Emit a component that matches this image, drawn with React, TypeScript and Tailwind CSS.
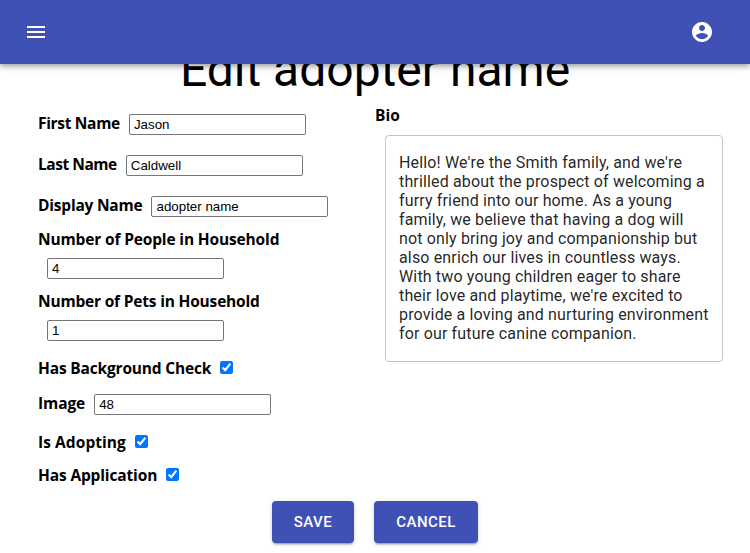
import type { ReactNode } from "react";

const label = "whitespace-nowrap font-['Open_Sans','Noto_Sans',sans-serif] text-[15.5px] font-bold leading-[22px]";
const button =
  "h-[42px] rounded bg-[#3f51b5] text-[15px] font-medium uppercase leading-[26px] tracking-[0.46px] text-white shadow-[0px_3px_1px_-2px_rgba(0,0,0,0.2),0px_2px_2px_0px_rgba(0,0,0,0.14),0px_1px_5px_0px_rgba(0,0,0,0.12)]";

function Input({ value }: { value: string }) {
  return (
    <input
      defaultValue={value}
      className="ml-[9px] h-[21px] w-[177px] rounded-[2px] border border-[#767676] bg-white px-1 font-['Liberation_Sans',sans-serif] text-[13.333px] leading-[15px] text-black"
    />
  );
}

function Check() {
  return <input type="checkbox" defaultChecked className="relative -top-px ml-[9px] h-[13px] w-[13px]" />;
}

function Row({ text, className, tracking, children }: { text: string; className: string; tracking: string; children?: ReactNode }) {
  return (
    <div className={`flex items-center ${className}`}>
      <label className={`${label} ${tracking}`}>{text}</label>
      {children}
    </div>
  );
}

export default function App() {
  return (
    <div className="h-[553px] w-[750px] overflow-hidden bg-white font-[Roboto,sans-serif] text-black">
      <header className="relative z-10 flex h-16 items-center justify-between bg-[#3f51b5] px-6 text-white shadow-[0px_2px_4px_-1px_rgba(0,0,0,0.2),0px_4px_5px_0px_rgba(0,0,0,0.14),0px_1px_10px_0px_rgba(0,0,0,0.12)]">
        <svg className="h-6 w-6" viewBox="0 0 24 24" fill="currentColor">
          <path d="M3 18h18v-2H3v2zm0-5h18v-2H3v2zm0-7v2h18V6H3z" />
        </svg>
        <svg className="mr-3 h-6 w-6" viewBox="0 0 24 24" fill="currentColor">
          <path d="M12 2C6.48 2 2 6.48 2 12s4.48 10 10 10 10-4.48 10-10S17.52 2 12 2zm0 3c1.66 0 3 1.34 3 3s-1.34 3-3 3-3-1.34-3-3 1.34-3 3-3zm0 14.2c-2.5 0-4.71-1.28-6-3.22.03-1.99 4-3.08 6-3.08 1.99 0 5.97 1.09 6 3.08-1.29 1.94-3.5 3.22-6 3.22z" />
        </svg>
      </header>
      <h1 className="-mt-[22px] h-[62px] text-center text-[48px] font-normal leading-[56px]">Edit adopter name</h1>
      <main className="flex h-[397px]">
        <div className="flex w-[375px] flex-col pl-[38px]">
          <Row text="First Name" className="h-[41px]" tracking="-mt-[3px] tracking-[-0.32px]"><Input value="Jason" /></Row>
          <Row text="Last Name" className="h-[41px]" tracking="-mt-[3px] tracking-[-0.46px]"><Input value="Caldwell" /></Row>
          <Row text="Display Name" className="h-[41px]" tracking="-mt-[3px] tracking-[-0.21px]"><Input value="adopter name" /></Row>
          <Row text="Number of People in Household" className="mt-px h-[22px]" tracking="-mt-px tracking-[-0.15px]" />
          <div className="flex h-10 items-start pt-2"><Input value="4" /></div>
          <Row text="Number of Pets in Household" className="h-[22px]" tracking="-mt-px tracking-[-0.19px]" />
          <div className="flex h-10 items-start pt-2"><Input value="1" /></div>
          <Row text="Has Background Check" className="mt-[5px] h-[22px]" tracking="tracking-[-0.17px]"><Check /></Row>
          <Row text="Image" className="mt-[14px] h-[22px]" tracking="-mt-[3px] tracking-[-0.1px]"><Input value="48" /></Row>
          <Row text="Is Adopting" className="mt-4 h-[22px]" tracking="tracking-[0.07px]"><Check /></Row>
          <Row text="Has Application" className="mt-[11px] h-[22px]" tracking="tracking-[-0.14px]"><Check /></Row>
        </div>
        <div className="w-[375px]">
          <div className="h-[31px]"><label className={label}>Bio</label></div>
          <div className="ml-[10px] h-[227px] w-[338px] whitespace-nowrap rounded border border-[#c4c4c4] px-[13px] py-[17px] text-[16px] leading-[19px] tracking-[0.15px] text-black/87">
            Hello! We're the Smith family, and we're<br />
            thrilled about the prospect of welcoming a<br />
            furry friend into our home. As a young<br />
            family, we believe that having a dog will<br />
            not only bring joy and companionship but<br />
            also enrich our lives in countless ways.<br />
            With two young children eager to share<br />
            their love and playtime, we're excited to<br />
            provide a loving and nurturing environment<br />
            for our future canine companion.
          </div>
        </div>
      </main>
      <footer className="flex justify-center gap-5">
        <button className={`${button} w-[82px]`}>Save</button>
        <button className={`${button} w-[104px]`}>Cancel</button>
      </footer>
    </div>
  );
}
